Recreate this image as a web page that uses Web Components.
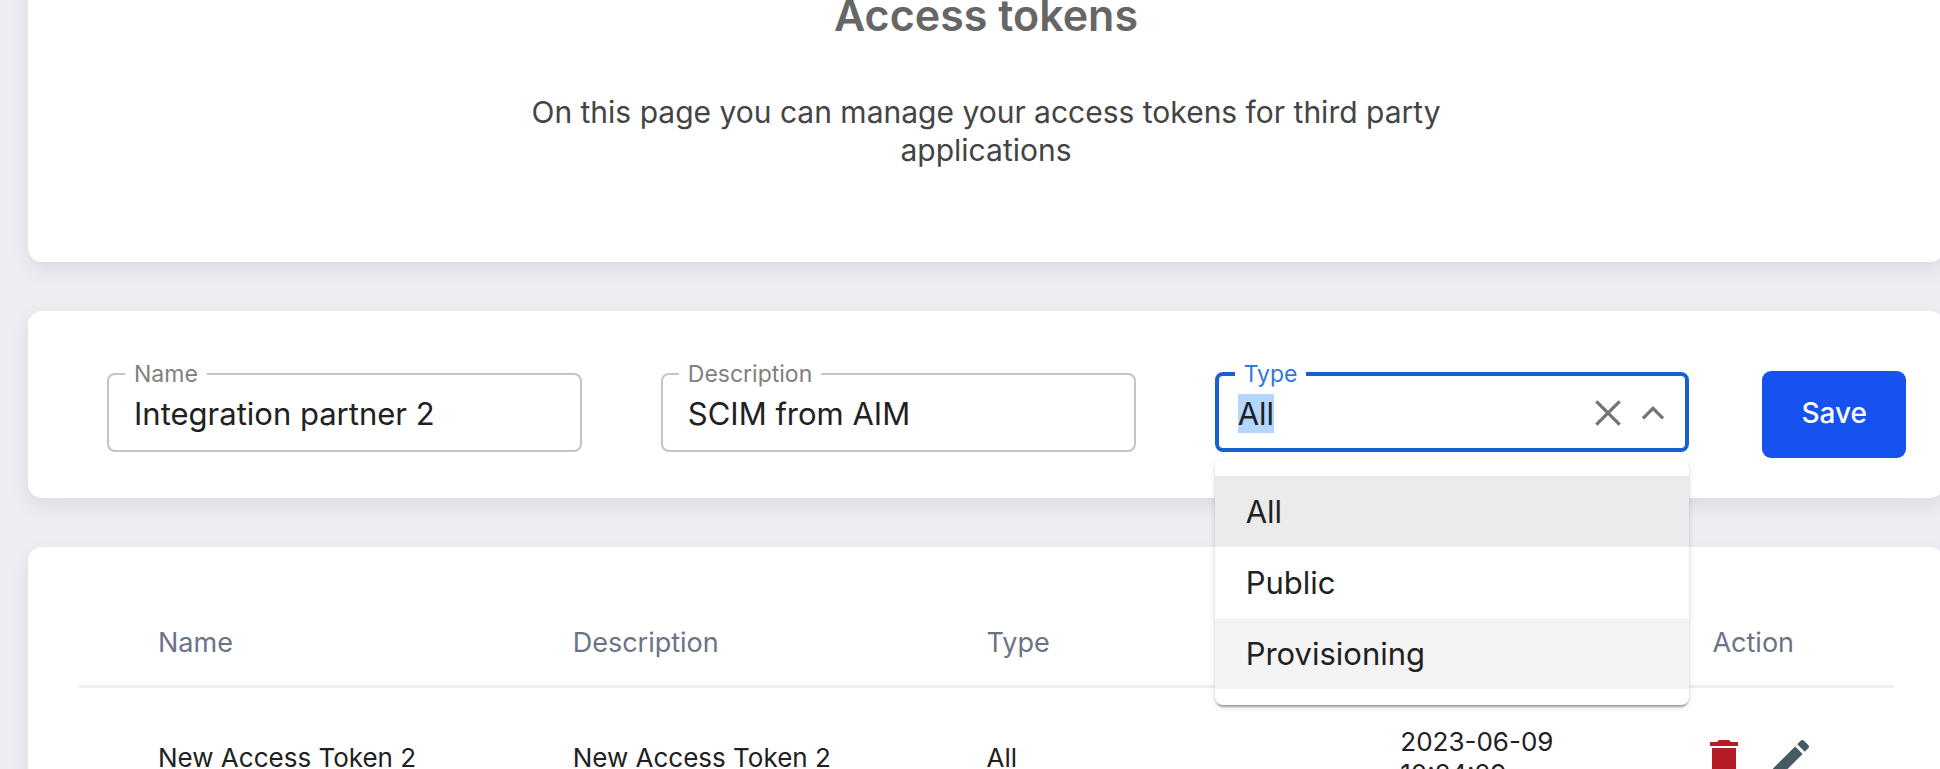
<!DOCTYPE html>
<html lang="en">
<head>
<meta charset="utf-8">
<title>Access tokens</title>
<style>

html, body {
    margin: 0;
    height: 100%;
}

body {
    background: #edeef3;
    color: #212121;
    font-family: Inter, "Liberation Sans", sans-serif;
    overflow: hidden;
}

</style>
</head>
<body>

<token-page></token-page>

<template id="tpl-page">
    <style>

:host {
    display: flex;
    flex-direction: column;
    gap: 49px;
    /* the page is scrolled a little, the first card starts above the fold */
    margin: -51px -4px 0 28px;
}

header {
    display: flex;
    flex-direction: column;
    align-items: center;
    gap: 52px;
    padding: 40px 40px 93px;
    text-align: center;
}

h1 {
    margin: 0;
    color: #666;
    font-size: 43px;
    font-weight: 600;
    line-height: 52px;
}

p {
    margin: 0;
    max-width: 1000px;
    color: #444;
    font-size: 30px;
    line-height: 38px;
}

form {
    display: flex;
    align-items: flex-start;
    gap: 79px;
    padding: 49px 38px 40px 79px;
}

app-field {
    flex: 1;
}

save-button {
    margin: 11px 0 0 -6px;
}

#form-card {
    position: relative;
    z-index: 1;
}

token-table {
    padding: 80px 50px 40px 51px;
}

    </style>
    <app-card>
        <header>
            <h1>Access tokens</h1>
            <p>On this page you can manage your access tokens for third party applications</p>
        </header>
    </app-card>
    <app-card id="form-card">
        <form>
            <app-field label="Name" value="Integration partner 2"></app-field>
            <app-field label="Description" value="SCIM from AIM"></app-field>
            <app-field label="Type" value="All" open>
                <icon-button slot="actions" icon="close" label="Clear"></icon-button>
                <icon-button slot="actions" icon="up" label="Close"></icon-button>
                <option-list slot="menu"></option-list>
            </app-field>
            <save-button>Save</save-button>
        </form>
    </app-card>
    <app-card>
        <token-table></token-table>
    </app-card>
</template>

<template id="tpl-card">
    <style>

:host {
    display: block;
    background: #fff;
    border-radius: 14px;
    box-shadow: 0 8px 20px rgba(0,0,0,0.08);
}

    </style>
    <slot></slot>
</template>

<template id="tpl-field">
    <style>

:host {
    display: block;
    position: relative;
    min-width: 0;
    --edge: 2px;
    --edge-color: #c4c4c4;
    --label-color: #808080;
    --indent: 9px;
}

:host([open]) {
    --edge: 4px;
    --edge-color: #1561d0;
    --label-color: #3577da;
    --indent: 3px;
}

fieldset {
    min-width: 0;
    margin: 0;
    padding: 0 12px calc(14px - var(--edge)) 16px;
    border: var(--edge) solid var(--edge-color);
    border-radius: 8px;
}

legend {
    padding: 0 9px;
    color: var(--label-color);
    font-size: 23px;
    line-height: 28px;
}

.row {
    display: flex;
    align-items: center;
    gap: 5px;
    height: 50px;
}

input {
    flex: 1;
    min-width: 0;
    height: 39px;
    margin: 0;
    padding: 0 0 0 var(--indent);
    border: 0;
    outline: 0;
    background: none;
    color: #212121;
    font: 31px/39px Inter, "Liberation Sans", sans-serif;
}

input::selection {
    background: #b3d7ff;
    color: #212121;
}

    </style>
    <fieldset>
        <legend><label for="input"></label></legend>
        <div class="row">
            <input id="input" type="text" autocomplete="off">
            <slot name="actions"></slot>
        </div>
    </fieldset>
    <slot name="menu"></slot>
</template>

<template id="tpl-icon-button">
    <style>

:host {
    display: block;
}

button {
    display: block;
    padding: 0;
    border: 0;
    background: none;
    color: #757575;
    cursor: pointer;
}

svg {
    display: block;
    width: var(--icon-size, 40px);
    height: var(--icon-size, 40px);
}

    </style>
    <button type="button"></button>
</template>

<template id="tpl-options">
    <style>

:host {
    display: block;
    position: absolute;
    top: 100%;
    left: 0;
    right: 0;
    margin-top: 8px;
    background: #fff;
    border-radius: 8px;
    box-shadow: 0 4px 2px -2px rgba(0,0,0,0.2),
                0 2px 2px rgba(0,0,0,0.14),
                0 2px 6px rgba(0,0,0,0.12);
}

ul {
    list-style: none;
    margin: 0;
    padding: 16px 0;
}

li {
    padding: 16px 31px;
    font-size: 31px;
    line-height: 39px;
}

li[aria-selected="true"] {
    background: #ebebeb;
}

li.hover {
    background: #f4f4f4;
}

    </style>
    <ul role="listbox" aria-label="Type">
        <li role="option" aria-selected="true">All</li>
        <li role="option" aria-selected="false">Public</li>
        <li role="option" aria-selected="false" class="hover">Provisioning</li>
    </ul>
</template>

<template id="tpl-save">
    <style>

:host {
    display: block;
}

button {
    display: block;
    padding: 24px 39px 27px;
    border: 0;
    border-radius: 9px;
    background: #1552f0;
    color: #fff;
    font: 500 28px/36px Inter, "Liberation Sans", sans-serif;
    cursor: pointer;
}

    </style>
    <button type="submit"><slot></slot></button>
</template>

<template id="tpl-table">
    <style>

:host {
    display: block;
}

table {
    width: 100%;
    table-layout: fixed;
    border-collapse: collapse;
    line-height: 32px;
}

col.first { width: 27.2%; }
col.wide { width: 22.8%; }
col.date { width: 17.2%; }

th {
    padding: 0 0 26px;
    border-bottom: 3px solid #edeef3;
    color: #6b7388;
    font-size: 27px;
    font-weight: 400;
    text-align: left;
}

td {
    padding: 38px 0;
    font-size: 26px;
    vertical-align: middle;
}

th:first-child,
td:first-child {
    padding-left: 79px;
}

td.date {
    padding-right: 60px;
}

.actions {
    display: flex;
    gap: 19px;
    margin-left: -12px;
    --icon-size: 48px;
}

    </style>
    <table>
        <colgroup>
            <col class="first"><col class="wide"><col class="wide"><col class="date"><col>
        </colgroup>
        <thead>
            <tr><th>Name</th><th>Description</th><th>Type</th><th></th><th>Action</th></tr>
        </thead>
        <tbody>
            <tr>
                <td>New Access Token 2</td>
                <td>New Access Token 2</td>
                <td>All</td>
                <td class="date">2023-06-09 10:24:29</td>
                <td>
                    <div class="actions">
                        <icon-button icon="trash" label="Delete"></icon-button>
                        <icon-button icon="pencil" label="Edit"></icon-button>
                    </div>
                </td>
            </tr>
        </tbody>
    </table>
</template>

<script>

'use strict';

const ICONS = {
    close: '<path d="M5 5l14 14M19 5L5 19" fill="none" stroke="currentColor" stroke-width="2"/>',
    up: '<path d="M6 15.2l6-6 6 6" fill="none" stroke="currentColor" stroke-width="2"/>',
    trash: '<path fill="#b51d22" d="M6 19c0 1.1.9 2 2 2h8c1.1 0 2-.9 2-2V7H6v12zM19 4h-3.5l-1-1h-5l-1 1H5v2h14V4z"/>',
    pencil: '<path fill="#455a64" d="M3 17.25V21h3.75L17.81 9.94l-3.75-3.75L3 17.25zM20.71 7.04c.39-.39.39-1.02 0-1.41l-2.34-2.34a1 1 0 0 0-1.41 0l-1.83 1.83 3.75 3.75 1.83-1.83z"/>'
};

class BaseElement extends HTMLElement {

    constructor (id) {
        super();

        const tpl = document.getElementById(id);

        this._root = this.attachShadow({mode: 'open'});
        this._root.appendChild(tpl.content.cloneNode(true));
    }
}

customElements.define('app-card', class extends BaseElement {
    constructor () { super('tpl-card'); }
});

customElements.define('icon-button', class extends BaseElement {

    constructor () { super('tpl-icon-button'); }

    connectedCallback () {
        const button = this._root.querySelector('button');

        button.setAttribute('aria-label', this.getAttribute('label'));
        button.innerHTML = '<svg viewBox="0 0 24 24" aria-hidden="true">' +
            ICONS[this.getAttribute('icon')] + '</svg>';
    }
});

customElements.define('option-list', class extends BaseElement {
    constructor () { super('tpl-options'); }
});

customElements.define('app-field', class extends BaseElement {

    constructor () { super('tpl-field'); }

    connectedCallback () {
        const input = this._root.querySelector('input');

        this._root.querySelector('label').textContent = this.getAttribute('label');
        input.value = this.getAttribute('value');

        // an open field has the focus, with its value selected
        if (this.hasAttribute('open')) {
            input.setAttribute('role', 'combobox');
            input.setAttribute('aria-expanded', 'true');
            input.focus({preventScroll: true});
            input.select();
        }
    }
});

customElements.define('save-button', class extends BaseElement {
    constructor () { super('tpl-save'); }
});

customElements.define('token-table', class extends BaseElement {
    constructor () { super('tpl-table'); }
});

customElements.define('token-page', class extends BaseElement {

    constructor () { super('tpl-page'); }

    connectedCallback () {
        this._root.querySelector('form').addEventListener('submit', event => {
            event.preventDefault();
        });
    }
});

</script>
</body>
</html>
